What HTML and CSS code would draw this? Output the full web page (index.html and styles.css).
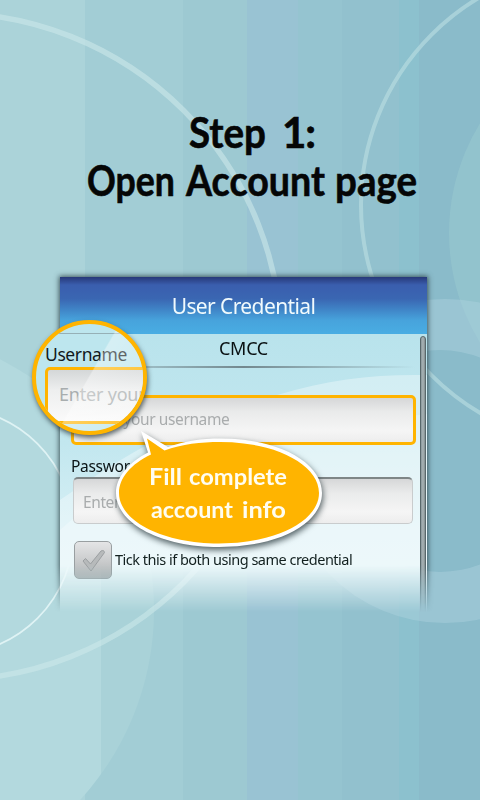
FILE: index.html
```html
<!DOCTYPE html>
<html lang="en">
<head>
<meta charset="utf-8">
<title>Step 1: Open Account page</title>
<link rel="stylesheet" href="styles.css">
</head>
<body>
<main class="screen">
  <svg class="backdrop" viewBox="0 0 480 800" fill="none" aria-hidden="true">
    <defs>
      <linearGradient id="pool" gradientUnits="userSpaceOnUse" x1="0" y1="0" x2="480" y2="0">
        <stop offset=".21" stop-color="#b3d9de"/>
        <stop offset=".21" stop-color="#a9d2d8"/>
      </linearGradient>
    </defs>
    <circle cx="-127" cy="610" r="281" fill="url(#pool)"/>
    <circle cx="659" cy="233" r="210" fill="#a5d2d5" fill-opacity=".32"/>
    <path fill-rule="evenodd" fill="#acd0dd" fill-opacity=".48" d="M283 461a162 162 0 1 0 324 0a162 162 0 1 0-324 0zM329 461a111 111 0 1 0 222 0a111 111 0 1 0-222 0z"/>
    <circle cx="-52" cy="346.500" r="333.500" stroke="#cbe8e9" stroke-opacity=".6" stroke-width="5.500"/>
    <circle cx="602" cy="205" r="241" stroke="#bddfe2" stroke-opacity=".6" stroke-width="4"/>
    <circle cx="-50" cy="531" r="123.600" stroke="#e6f7f8" stroke-opacity=".85" stroke-width="1.800"/>
  </svg>

  <h1 class="title">
    <svg width="340" height="96" viewBox="0 0 340 96">
      <text y="38"><tspan x="118" textLength="77" lengthAdjust="spacingAndGlyphs">Step</tspan> <tspan x="211" textLength="34" lengthAdjust="spacing">1:</tspan></text>
      <text y="86"><tspan x="16" textLength="88" lengthAdjust="spacingAndGlyphs">Open</tspan> <tspan x="115" textLength="139" lengthAdjust="spacingAndGlyphs">Account</tspan> <tspan x="264" textLength="82" lengthAdjust="spacingAndGlyphs">page</tspan></text>
    </svg>
  </h1>

  <section class="phone">
    <div class="card">
      <header class="bar">User Credential</header>
      <div class="body">
        <svg class="sheen" viewBox="0 0 367 280" aria-hidden="true">
          <path fill="#ffffff" fill-opacity=".34" d="M217 61C270 45 315 40 367 41V280H0V166C60 125 110 90 217 61z"/>
          <path fill="#ffffff" fill-opacity=".26" d="M0 196L95 112L367 80V280H0z"/>
        </svg>
        <div class="carrier">CMCC</div>
        <div class="rule"></div>
        <div class="field active">Enter your username</div>
        <div class="label">Password</div>
        <div class="field">Enter</div>
        <div class="check">
          <span class="box">
            <svg width="38" height="38" viewBox="0 0 38 38"><path d="M9 20l2.500-2.500l5 5.500L27 10q3-1.500 3.500 1.500L17 30z" fill="#b7babb" stroke="#9b9fa1" stroke-width="1" stroke-linejoin="round"/></svg>
          </span>
          <span class="tick">Tick this if both using same credential</span>
        </div>
        <div class="scroll"></div>
      </div>
    </div>
  </section>

  <div class="lens">
    <div class="lensline"></div>
    <div class="lenslabel">Username</div>
    <div class="lensfield">Enter your</div>
    <div class="gloss"></div>
  </div>

  <svg class="bubble" width="222" height="132" viewBox="110 426 222 132">
    <path d="M141 431L168 447C184 441 202 438.500 220 438.500C280 438.500 322 463 322 493C322 523 280 547 219 547C160 547 116 523 116 493C116 477 128 463 148 452.500Z" fill="#fff"/>
    <path d="M147 438.500L164.500 450.500C182 444 201 442 220 442C276 442 319 465 319 493C319 521 276 543.500 219 543.500C163 543.500 119 521 119 493C119 478 131 464 151 454.500Z" fill="#ffb400"/>
    <text y="485"><tspan x="149" textLength="33" lengthAdjust="spacingAndGlyphs">Fill</tspan> <tspan x="189" textLength="98" lengthAdjust="spacingAndGlyphs">complete</tspan></text>
    <text y="518"><tspan x="151" textLength="82" lengthAdjust="spacingAndGlyphs">account</tspan> <tspan x="242" textLength="44" lengthAdjust="spacingAndGlyphs">info</tspan></text>
  </svg>
</main>
</body>
</html>
```
FILE: styles.css
```css
* { box-sizing: border-box; }
body { margin: 0; font-family: "Noto Sans", "Open Sans", sans-serif; }
.screen {
  position: relative;
  width: 480px;
  height: 800px;
  overflow: hidden;
  background: linear-gradient(90deg, #abd3d9 0 85px, #a2cdd5 85px 183px, #9dc9d2 183px 247px, #99c3d3 247px 298px, #95c4d0 298px 342px, #92c1ce 342px 399px, #8cc1ce 399px 419px, #8abbca 419px);
}
.backdrop { position: absolute; inset: 0; width: 480px; height: 800px; }
.title { position: relative; margin: 0; padding: 110px 0 0 71px; height: 277px; }
.title svg, .bubble { display: block; overflow: visible; }
.title text { font: 700 42px "Lato", sans-serif; fill: #050606; stroke: #050606; stroke-width: .6; }
.phone {
  position: relative;
  margin-top: -12px;
  padding: 12px 12px 0 60px;
  width: 439px;
  height: 350px;
  -webkit-mask-image: linear-gradient(#000 300px, rgba(0,0,0,.5) 323px, transparent 347px);
  mask-image: linear-gradient(#000 300px, rgba(0,0,0,.5) 323px, transparent 347px);
}
.card { width: 367px; height: 370px; box-shadow: 0 0 5px 1px rgba(45,65,70,.85); }
.bar {
  height: 57px;
  line-height: 59px;
  text-align: center;
  color: #f1fafd;
  font-size: 21px;
  letter-spacing: -.6px;
  background: linear-gradient(#273878, #3a5eae 14%, #3a66b2 38%, #4086c8 58%, #47a3dc 76%, #49ade3);
}
.body { position: relative; height: 313px; overflow: hidden; background: linear-gradient(#b9e3ec, #c2e7ef 35%, #d8f0f5 65%, #e0f4f8); }
.sheen { position: absolute; top: 0; left: 0; width: 367px; height: 280px; }
.carrier { position: relative; height: 32px; line-height: 29px; text-align: center; font-size: 18px; letter-spacing: -.3px; color: #091012; }
.rule { height: 1.5px; margin: 0 12px 27.500px; background: linear-gradient(90deg, transparent, #73888e 50%, transparent); }
.field {
  position: relative;
  width: 340px;
  height: 47px;
  margin-left: 13px;
  padding-left: 9px;
  line-height: 46px;
  font-size: 15.500px;
  letter-spacing: -.4px;
  color: #a9acad;
  border: 1px solid #c9cccd;
  border-top: 2px solid #7e8586;
  border-radius: 5px;
  background: linear-gradient(#d6d7d8, #eaebeb 32%, #f5f5f5 75%, #ededed);
}
.field.active { width: 345px; height: 50px; margin-left: 11px; border: 3px solid #ffb400; line-height: 43px; }
.label { position: relative; height: 32px; padding: 11px 0 0 11px; line-height: 20px; font-size: 15.500px; letter-spacing: -.3px; color: #0a1315; }
.check { position: relative; display: flex; margin: 17px 0 0 14px; gap: 3px; }
.box { width: 38px; height: 38px; border: 1.5px solid #999fa1; border-radius: 5px; background: linear-gradient(#e4e5e6, #c9cbcc 55%, #acafb0); }
.box svg { display: block; margin: -1.500px; }
.tick { line-height: 37px; font-size: 14.500px; letter-spacing: -.5px; color: #12201f; white-space: nowrap; }
.scroll { position: absolute; top: 2px; right: 1px; width: 6px; height: 311px; border: 1px solid #59686b; border-radius: 3px; background: linear-gradient(90deg, #89989c, #aab4b6, #808c8e); }
.lens {
  position: absolute;
  left: 32px;
  top: 320px;
  width: 115px;
  height: 115px;
  border: 4px solid #ffb400;
  border-radius: 50%;
  overflow: hidden;
  background: #bde6ee;
  box-shadow: 1px 3px 5px rgba(40,55,60,.75);
}
.lensline { height: 1px; margin: 9px 0 0 15px; background: #96b0b6; }
.lenslabel { margin: 8px 0 0 9px; line-height: 24px; font-size: 17.500px; letter-spacing: -.4px; color: #11191b; }
.lensfield { width: 170px; height: 57px; margin: 1px 0 0 9px; padding-left: 11px; border: 3px solid #ffb400; border-radius: 5px; line-height: 49px; font-size: 18px; letter-spacing: -.2px; color: #a8adae; white-space: nowrap; background: linear-gradient(#d4d7d8, #eeefef 40%, #fafafa); }
.gloss { position: absolute; inset: 0; background: linear-gradient(120deg, transparent 49%, rgba(255,255,255,.38) 50%, rgba(255,255,255,.16)); }
.bubble { position: absolute; left: 110px; top: 426px; filter: drop-shadow(1px 3px 3px rgba(30,45,50,.75)); }
.bubble text { font: 700 23.500px "Lato", sans-serif; fill: #fffdf0; }
```
